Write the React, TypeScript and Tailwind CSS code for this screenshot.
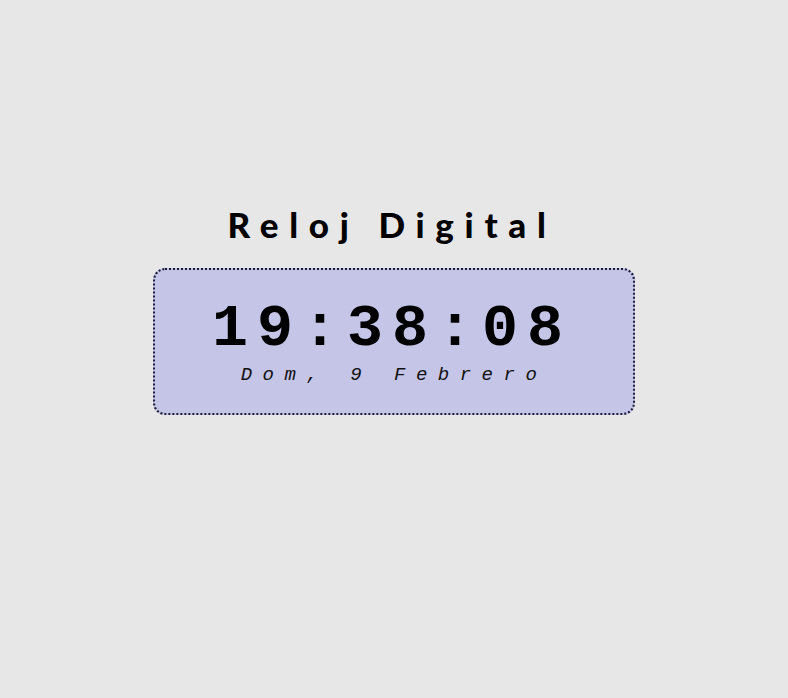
export default function App() {
  return (
    <div className="min-h-[698px] w-full bg-[#e7e7e7] pt-[199px]">
      <h1 className="pr-[4px] text-center font-['Lato','Open_Sans',sans-serif] text-[35px] font-black leading-[50px] tracking-[10.7px] text-black">
        Reloj Digital
      </h1>
      <div className="mx-auto mt-[19px] flex h-[147px] w-[482px] flex-col items-center rounded-[12px] border-2 border-dotted border-[#1c1c3a] bg-[#c5c5e8] pt-[29px]">
        <div className="pr-[4px] font-['Liberation_Mono',monospace] text-[60px] font-bold leading-[60px] tracking-[9px] text-black">
          19:38:08
        </div>
        <div className="mt-[4px] font-['Liberation_Mono',monospace] text-[19px] italic leading-[24px] tracking-[10.5px] text-[#111]">
          Dom, 9 Febrero
        </div>
      </div>
    </div>
  );
}
